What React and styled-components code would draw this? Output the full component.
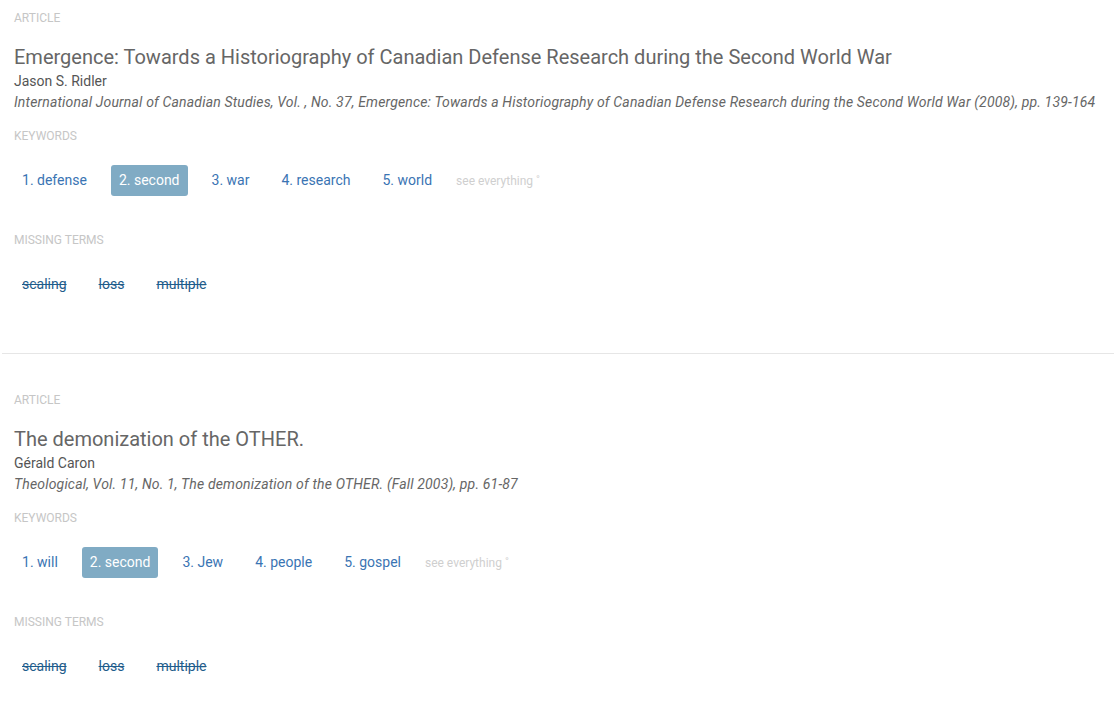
import React from "react";
import styled, { createGlobalStyle } from "styled-components";

const articles = [
  {
    title: "Emergence: Towards a Historiography of Canadian Defense Research during the Second World War",
    author: "Jason S. Ridler",
    source:
      "International Journal of Canadian Studies, Vol. , No. 37, Emergence: Towards a Historiography of Canadian Defense Research during the Second World War (2008), pp. 139-164",
    keywords: ["defense", "second", "war", "research", "world"],
    active: 1,
    missing: ["scaling", "loss", "multiple"],
  },
  {
    title: "The demonization of the OTHER.",
    author: "Gérald Caron",
    source: "Theological, Vol. 11, No. 1, The demonization of the OTHER. (Fall 2003), pp. 61-87",
    keywords: ["will", "second", "Jew", "people", "gospel"],
    active: 1,
    missing: ["scaling", "loss", "multiple"],
  },
];

export default function App() {
  return (
    <>
      <GlobalStyle />
      <Page>
        {articles.map((a, i) => (
          <React.Fragment key={i}>
            {i > 0 && <Divider />}
            <Article $first={i === 0}>
              <Label>Article</Label>
              <Title>{a.title}</Title>
              <Author>{a.author}</Author>
              <Source>{a.source}</Source>
              <Label $top={16}>Keywords</Label>
              <Tags $top={21}>
                {a.keywords.map((k, j) => (
                  <Keyword key={k} $active={j === a.active}>
                    {j + 1}. {k}
                  </Keyword>
                ))}
                <SeeAll>see everything ˚</SeeAll>
              </Tags>
              <Label $top={36}>Missing terms</Label>
              <Tags $top={21}>
                {a.missing.map((m) => (
                  <Missing key={m}>{m}</Missing>
                ))}
              </Tags>
            </Article>
          </React.Fragment>
        ))}
      </Page>
    </>
  );
}

const GlobalStyle = createGlobalStyle`
  body {
    margin: 0;
    background: #fff;
    font-family: Roboto, "Liberation Sans", sans-serif;
  }
`;

const Page = styled.div`
  display: flex;
  flex-direction: column;
`;

const Article = styled.section`
  display: flex;
  flex-direction: column;
  align-items: flex-start;
  padding: ${(p) => (p.$first ? "10px 14px 53px" : "38px 14px 40px")};
`;

const Divider = styled.hr`
  margin: 0 0 0 2px;
  border: none;
  border-top: 1px solid #e6e6e6;
`;

const Label = styled.div`
  font-size: 12px;
  line-height: 16px;
  color: #c6c6c6;
  text-transform: uppercase;
  margin-top: ${(p) => p.$top || 0}px;
`;

const Title = styled.h2`
  margin: 19px 0 0 0;
  font-size: 20px;
  font-weight: 400;
  line-height: 24px;
  color: #666;
`;

const Author = styled.div`
  font-size: 14px;
  line-height: 20px;
  color: #555;
  margin-top: 2px;
`;

const Source = styled.div`
  font-size: 14px;
  line-height: 20px;
  font-style: italic;
  letter-spacing: 0.17px;
  color: #666;
  margin-top: 1px;
`;

const Tags = styled.div`
  display: flex;
  align-items: center;
  gap: 16px;
  margin-top: ${(p) => p.$top}px;
`;

const Keyword = styled.span`
  font-size: 14px;
  line-height: 19px;
  padding: 6px 8px;
  border-radius: 3px;
  color: ${(p) => (p.$active ? "#fff" : "#3a74b3")};
  background: ${(p) => (p.$active ? "#80abc4" : "transparent")};
  cursor: pointer;
`;

const SeeAll = styled.span`
  font-size: 12px;
  color: #cfcfcf;
  cursor: pointer;
`;

const Missing = styled.span`
  font-size: 14px;
  line-height: 19px;
  padding: 6px 8px;
  color: #1f5d8c;
  text-decoration: line-through;
`;
